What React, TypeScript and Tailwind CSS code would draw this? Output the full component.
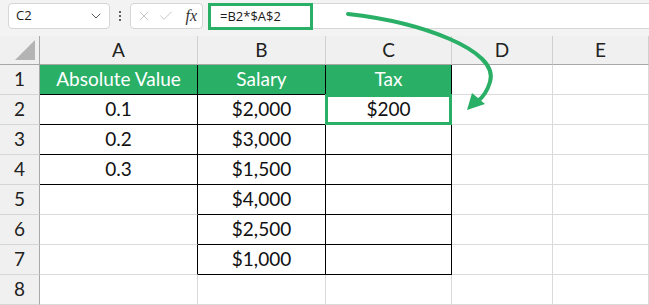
import { ChevronDown, X, Check } from 'lucide-react';

const green = 'bg-[#2aaf67]';

type Cell = { text?: string; kind: 'plain' | 'head' | 'box' | 'edge' };

// rows 1..8, columns A..E
const rows: Cell[][] = [
  [
    { text: 'Absolute Value', kind: 'head' },
    { text: 'Salary', kind: 'head' },
    { text: 'Tax', kind: 'head' },
    { kind: 'plain' },
    { kind: 'plain' },
  ],
  [
    { text: '0.1', kind: 'box' },
    { text: '$2,000', kind: 'box' },
    { text: '$200', kind: 'box' },
    { kind: 'plain' },
    { kind: 'plain' },
  ],
  [
    { text: '0.2', kind: 'box' },
    { text: '$3,000', kind: 'box' },
    { kind: 'box' },
    { kind: 'plain' },
    { kind: 'plain' },
  ],
  [
    { text: '0.3', kind: 'box' },
    { text: '$1,500', kind: 'box' },
    { kind: 'box' },
    { kind: 'plain' },
    { kind: 'plain' },
  ],
  [{ kind: 'edge' }, { text: '$4,000', kind: 'box' }, { kind: 'box' }, { kind: 'plain' }, { kind: 'plain' }],
  [{ kind: 'edge' }, { text: '$2,500', kind: 'box' }, { kind: 'box' }, { kind: 'plain' }, { kind: 'plain' }],
  [{ kind: 'edge' }, { text: '$1,000', kind: 'box' }, { kind: 'box' }, { kind: 'plain' }, { kind: 'plain' }],
  [{ kind: 'plain' }, { kind: 'plain' }, { kind: 'plain' }, { kind: 'plain' }, { kind: 'plain' }],
];

const cellClass = (kind: Cell['kind']) => {
  if (kind === 'head') return `${green} text-white border-r border-b border-black`;
  if (kind === 'box') return 'bg-white text-[#111] border-r border-b border-black';
  if (kind === 'edge') return 'bg-white border-r border-r-black border-b border-b-[#dadada]';
  return 'bg-white border-r border-b border-[#dadada]';
};

const App = () => {
  return (
    <div className="relative w-[649px] h-[305px] overflow-hidden bg-white font-['Lato',sans-serif]">
      {/* Formula bar */}
      <div className="h-[36px] bg-[#f3f3f3] flex items-start pt-[3px] font-['Open_Sans',sans-serif] text-[13px] text-[#1a1a1a]">
        <div className="ml-[8px] w-[102px] h-[26px] bg-white border border-[#d6d6d6] rounded-[4px] flex items-center justify-between pl-[7px] pr-[5px]">
          <span>C2</span>
          <ChevronDown className="w-4 h-4 text-[#555]" strokeWidth={1.5} />
        </div>
        <div className="w-[20px] h-[26px] flex flex-col items-center justify-center gap-[2px]">
          <span className="w-[2px] h-[2px] bg-[#333] rounded-full" />
          <span className="w-[2px] h-[2px] bg-[#333] rounded-full" />
          <span className="w-[2px] h-[2px] bg-[#333] rounded-full" />
        </div>
        <div className="w-[73px] h-[26px] bg-white border border-[#d6d6d6] rounded-[4px] flex items-center pl-[5px] gap-[6px]">
          <X className="w-4 h-4 text-[#b8b8b8]" strokeWidth={1.2} />
          <Check className="w-4 h-4 text-[#b8b8b8]" strokeWidth={1.2} />
          <span className="ml-auto mr-[5px] font-['Liberation_Serif',serif] italic text-[16px] text-[#333]">fx</span>
        </div>
        <div className="ml-[5px] flex-1 h-[26px] bg-white border-y border-[#d6d6d6] relative">
          <div className="absolute left-0 top-[-1px] w-[105px] h-[27px] border-[3px] border-[#2aaf67]" />
          <span className="absolute left-[12px] top-[3px]">=B2*$A$2</span>
        </div>
      </div>

      {/* Sheet */}
      <div className="grid grid-cols-[40px_158px_128px_126px_101px_96px] grid-rows-[29px_repeat(8,30px)] text-[19px]">
        <div className="bg-[#f0f0f0] border-r border-b border-[#a8a8a8] flex items-end justify-end pr-[4px] pb-[4px]">
          <div className="w-0 h-0 border-l-[20px] border-l-transparent border-b-[20px] border-b-[#b4b4b4]" />
        </div>
        {['A', 'B', 'C', 'D', 'E'].map((c) => (
          <div
            key={c}
            className="bg-[#f0f0f0] border-r border-r-[#d0d0d0] border-b border-b-[#a8a8a8] flex items-center justify-center text-[#222]"
          >
            {c}
          </div>
        ))}
        {rows.map((row, i) => (
          <div key={i} className="contents">
            <div className="bg-[#f0f0f0] border-r border-r-[#a8a8a8] border-b border-b-[#d6d6d6] flex items-center justify-center text-[#222]">
              {i + 1}
            </div>
            {row.map((cell, j) => (
              <div key={j} className={`relative flex items-center justify-center ${cellClass(cell.kind)}`}>
                {cell.text}
                {i === 1 && j === 2 && (
                  <div className="absolute -left-px -top-px w-[127px] h-[31px] border-[3px] border-[#2aaf67]" />
                )}
              </div>
            ))}
          </div>
        ))}
      </div>

      {/* Annotation arrow */}
      <svg className="absolute inset-0 pointer-events-none" width="649" height="305" viewBox="0 0 649 305">
        <path
          d="M348 14 C 420 22, 500 50, 490 82 C 487 92, 483 97, 478 101"
          fill="none"
          stroke="#2aaf67"
          strokeWidth="4"
          strokeLinecap="round"
        />
        <polygon points="467,110 472,93 485,104" fill="#2aaf67" />
      </svg>
    </div>
  );
};

export default App;
